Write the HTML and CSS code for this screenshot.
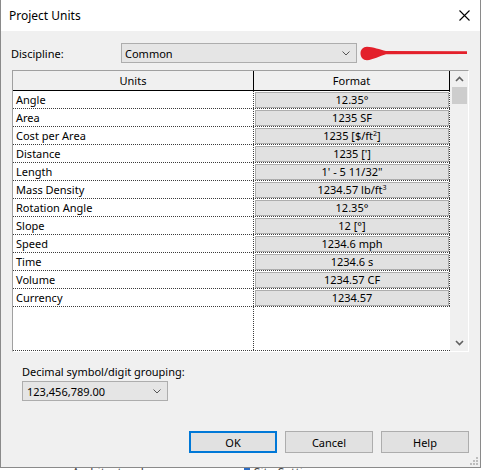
FILE: index.html
```html
<!DOCTYPE html>
<html>
<head>
<meta charset="utf-8">
<link rel="stylesheet" href="styles.css">
</head>
<body>
<div class="window">
  <div class="titlebar">
    <span class="title">Project Units</span>
    <svg class="close" width="11" height="11" viewBox="0 0 11 11"><path d="M0.5 0.5L10.5 10.5M10.5 0.5L0.5 10.5" stroke="#000" stroke-width="1.1" fill="none"/></svg>
  </div>
  <div class="discipline-row">
    <span class="lbl">Discipline:</span>
    <div class="combo combo-discipline">
      <span class="combo-text">Common</span>
      <svg class="chev" width="8" height="5" viewBox="0 0 8 5"><path d="M0.5 0.5L4 4L7.5 0.5" stroke="#555" stroke-width="1" fill="none"/></svg>
    </div>
    <svg class="arrow" width="108" height="15" viewBox="0 0 108 15"><path d="M7 0.8 C3 0.8 0.5 3.8 0.5 7.5 C0.5 11.2 3 14.2 7 14.2 C13 14 20 9.8 26 8.3 L107 7.9 L107 5.3 L26 5.1 C20 3.8 13 0.8 7 0.8 Z" fill="#e3202b"/></svg>
  </div>
  <div class="table">
    <div class="grid">
      <div class="hdr">
        <div class="hc hc-units">Units</div>
        <div class="hc hc-format">Format</div>
      </div>
      <div class="row"><div class="c-unit">Angle</div><div class="c-fmt"><div class="fmt-btn">12.35°</div></div></div>
      <div class="row"><div class="c-unit">Area</div><div class="c-fmt"><div class="fmt-btn">1235 SF</div></div></div>
      <div class="row"><div class="c-unit">Cost per Area</div><div class="c-fmt"><div class="fmt-btn">1235 [$/ft<sup>2</sup>]</div></div></div>
      <div class="row"><div class="c-unit">Distance</div><div class="c-fmt"><div class="fmt-btn">1235 [']</div></div></div>
      <div class="row"><div class="c-unit">Length</div><div class="c-fmt"><div class="fmt-btn">1' - 5 11/32"</div></div></div>
      <div class="row"><div class="c-unit">Mass Density</div><div class="c-fmt"><div class="fmt-btn">1234.57 lb/ft<sup>3</sup></div></div></div>
      <div class="row"><div class="c-unit">Rotation Angle</div><div class="c-fmt"><div class="fmt-btn">12.35°</div></div></div>
      <div class="row"><div class="c-unit">Slope</div><div class="c-fmt"><div class="fmt-btn">12 [°]</div></div></div>
      <div class="row"><div class="c-unit">Speed</div><div class="c-fmt"><div class="fmt-btn">1234.6 mph</div></div></div>
      <div class="row"><div class="c-unit">Time</div><div class="c-fmt"><div class="fmt-btn">1234.6 s</div></div></div>
      <div class="row"><div class="c-unit">Volume</div><div class="c-fmt"><div class="fmt-btn">1234.57 CF</div></div></div>
      <div class="row"><div class="c-unit">Currency</div><div class="c-fmt"><div class="fmt-btn">1234.57</div></div></div>
      <div class="filler"><div class="f-unit"></div><div class="f-fmt"></div></div>
    </div>
    <div class="scrollbar">
      <div class="sb-btn"><svg width="9" height="6" viewBox="0 0 9 6"><path d="M1 5L4.5 1.5L8 5" stroke="#606060" stroke-width="1.6" fill="none"/></svg></div>
      <div class="sb-thumb"></div>
      <div class="sb-track"></div>
      <div class="sb-btn"><svg width="9" height="6" viewBox="0 0 9 6"><path d="M1 1L4.5 4.5L8 1" stroke="#606060" stroke-width="1.6" fill="none"/></svg></div>
    </div>
  </div>
  <div class="decimal">
    <div class="dec-lbl">Decimal symbol/digit grouping:</div>
    <div class="combo combo-decimal">
      <span class="combo-text">123,456,789.00</span>
      <svg class="chev" width="8" height="5" viewBox="0 0 8 5"><path d="M0.5 0.5L4 4L7.5 0.5" stroke="#555" stroke-width="1" fill="none"/></svg>
    </div>
  </div>
  <div class="buttons">
    <div class="btn btn-default">OK</div>
    <div class="btn">Cancel</div>
    <div class="btn">Help</div>
  </div>
  <svg class="grip" width="9" height="9" viewBox="0 0 9 9">
    <rect x="7" y="1" width="2" height="2" fill="#bdbdbd"/>
    <rect x="4" y="4" width="2" height="2" fill="#bdbdbd"/>
    <rect x="7" y="4" width="2" height="2" fill="#bdbdbd"/>
    <rect x="1" y="7" width="2" height="2" fill="#bdbdbd"/>
    <rect x="4" y="7" width="2" height="2" fill="#bdbdbd"/>
    <rect x="7" y="7" width="2" height="2" fill="#bdbdbd"/>
  </svg>
</div>
<div class="behind">
  <span class="bh-text bh-arch">Architectural</span>
  <span class="bh-icon"></span>
  <span class="bh-text">Site Settings</span>
</div>
</body>
</html>
```
FILE: styles.css
```css
html, body {
  margin: 0;
  padding: 0;
}
body {
  width: 482px;
  height: 470px;
  overflow: hidden;
  background: #ffffff;
  font-family: "Noto Sans", "Open Sans", sans-serif;
  font-size: 11px;
  color: #000;
}
.window {
  position: relative;
  box-sizing: border-box;
  width: 481px;
  height: 468px;
  border: 1px solid #8a8a8a;
  border-top: 0;
  background: #f0f0f0;
  display: flex;
  flex-direction: column;
}
.titlebar {
  height: 31px;
  flex: none;
  background: #ffffff;
  display: flex;
  align-items: center;
  padding-left: 8px;
}
.title {
  font-size: 12px;
}
.close {
  margin-left: auto;
  margin-right: 10px;
}
.discipline-row {
  margin-top: 12px;
  height: 20px;
  display: flex;
  align-items: center;
}
.lbl {
  margin-left: 10px;
  width: 110px;
}
.combo {
  box-sizing: border-box;
  height: 20px;
  border: 1px solid #adadad;
  background: #e5e5e5;
  display: flex;
  align-items: center;
  padding-left: 3px;
}
.combo-text {
  flex: 1;
}
.chev {
  margin-right: 6px;
}
.combo-discipline {
  width: 236px;
}
.arrow {
  margin-left: 3px;
  margin-top: 0;
}
.table {
  margin-top: 7px;
  margin-left: 11px;
  box-sizing: border-box;
  width: 457px;
  height: 282px;
  border: 1px solid;
  border-color: #a0a0a0 #ffffff #ffffff #a0a0a0;
  display: flex;
}
.grid {
  width: 437px;
  display: flex;
  flex-direction: column;
}
.hdr {
  box-sizing: border-box;
  height: 20px;
  display: flex;
  border-bottom: 1px solid #000;
  background: #f0f0f0;
}
.hc {
  box-sizing: border-box;
  text-align: center;
  line-height: 19px;
  border-right: 1px solid #000;
}
.hc-units {
  width: 241px;
}
.hc-format {
  width: 196px;
}
.row {
  box-sizing: border-box;
  height: 18px;
  display: flex;
  border-bottom: 1px dotted #3c3c3c;
  background: #ffffff;
}
.c-unit {
  box-sizing: border-box;
  width: 241px;
  padding-left: 3px;
  line-height: 17px;
  border-right: 1px dotted #3c3c3c;
}
.c-fmt {
  box-sizing: border-box;
  width: 196px;
  padding: 1px 0 0 1px;
  border-right: 1px dotted #3c3c3c;
}
.fmt-btn {
  box-sizing: border-box;
  height: 16px;
  border: 1px solid #adadad;
  background: #e1e1e1;
  text-align: center;
  line-height: 14px;
}
.fmt-btn sup {
  font-size: 7px;
  line-height: 0;
  vertical-align: 4px;
}
.filler {
  flex: 1;
  display: flex;
  border-bottom: 1px dotted #3c3c3c;
  background: #ffffff;
}
.f-unit {
  box-sizing: border-box;
  width: 241px;
  border-right: 1px dotted #3c3c3c;
}
.f-fmt {
  width: 196px;
}
.scrollbar {
  width: 18px;
  background: #f0f0f0;
  display: flex;
  flex-direction: column;
}
.sb-btn {
  height: 16px;
  display: flex;
  align-items: center;
  justify-content: center;
}
.sb-thumb {
  height: 17px;
  width: 15px;
  margin-left: 2px;
  background: #cdcdcd;
}
.sb-track {
  flex: 1;
}
.decimal {
  margin-top: 12px;
  margin-left: 21px;
}
.dec-lbl {
  line-height: 15px;
}
.combo-decimal {
  margin-top: 2px;
  width: 146px;
  padding-left: 4px;
}
.buttons {
  margin-top: 30px;
  margin-right: 11px;
  display: flex;
  justify-content: flex-end;
  gap: 8px;
}
.btn {
  box-sizing: border-box;
  width: 88px;
  height: 22px;
  border: 1px solid #adadad;
  background: #e1e1e1;
  display: flex;
  align-items: center;
  justify-content: center;
}
.btn-default {
  border: 2px solid #0078d7;
}
.grip {
  position: absolute;
  right: 2px;
  bottom: 2px;
}
.behind {
  height: 2px;
  overflow: hidden;
  display: flex;
  align-items: flex-start;
  background: #ffffff;
}
.bh-text {
  font-size: 12px;
  line-height: 10px;
  color: #444;
}
.bh-arch {
  margin-left: 72px;
  margin-right: 100px;
}
.bh-icon {
  width: 6px;
  height: 2px;
  background: #2b6cc4;
  margin-right: 4px;
}
```
